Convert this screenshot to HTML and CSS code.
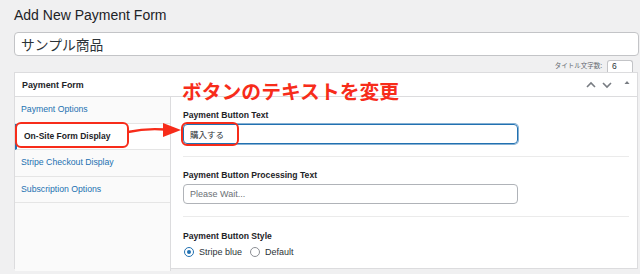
FILE: index.html
```html
<!DOCTYPE html>
<html lang="ja">
<head>
<meta charset="utf-8">
<title>Add New Payment Form</title>
<link rel="stylesheet" href="styles.css">
</head>
<body>
<div class="wrap">
  <h1 class="page-title">Add New Payment Form</h1>
  <div class="title-input">サンプル商品</div>
  <div class="count-row">
    <span class="count-label">タイトル文字数:</span>
    <span class="count-box">6</span>
  </div>
  <div class="panel">
    <div class="panel-head">
      <span class="panel-title">Payment Form</span>
      <span class="panel-icons">
        <svg class="ico" width="12" height="10" viewBox="0 0 12 10"><path d="M2 7 L6 3 L10 7" fill="none" stroke="#787c82" stroke-width="1.6"/></svg>
        <svg class="ico" width="12" height="10" viewBox="0 0 12 10"><path d="M2 3 L6 7 L10 3" fill="none" stroke="#787c82" stroke-width="1.6"/></svg>
        <svg class="ico tri" width="8" height="10" viewBox="0 0 8 10"><path d="M1.5 6 L4 3 L6.5 6 Z" fill="#787c82"/></svg>
      </span>
    </div>
    <div class="panel-body">
      <ul class="tabs">
        <li class="tab">Payment Options</li>
        <li class="tab active">On-Site Form Display</li>
        <li class="tab">Stripe Checkout Display</li>
        <li class="tab">Subscription Options</li>
      </ul>
      <div class="content">
        <div class="field">
          <div class="label">Payment Button Text</div>
          <div class="input focus">購入する</div>
        </div>
        <div class="field">
          <div class="label">Payment Button Processing Text</div>
          <div class="input placeholder">Please Wait...</div>
        </div>
        <div class="field last">
          <div class="label">Payment Button Style</div>
          <div class="radios">
            <span class="radio checked"></span><span class="radio-text">Stripe blue</span>
            <span class="radio"></span><span class="radio-text">Default</span>
          </div>
        </div>
      </div>
    </div>
  </div>
</div>

<div class="note">ボタンのテキストを変更</div>
<div class="mark mark-tab"></div>
<div class="mark mark-input"></div>
<svg class="arrow" width="640" height="274" viewBox="0 0 640 274">
  <path d="M128 132 Q146 128 165 129.5" fill="none" stroke="#f72c1a" stroke-width="2.4"/>
  <polygon points="163,123 181,130 163,137" fill="#f72c1a"/>
</svg>
</body>
</html>
```
FILE: styles.css
```css
* { box-sizing: border-box; }
html, body { margin: 0; padding: 0; }
body {
  background: #f0f0f1;
  font-family: "Liberation Sans", "Noto Sans CJK JP", sans-serif;
  color: #1d2327;
  width: 640px;
  height: 274px;
  overflow: hidden;
  position: relative;
}
.wrap { padding: 0 2px 0 14px; }
.page-title {
  margin: 0;
  padding-top: 5px;
  height: 32px;
  font-size: 14px;
  font-weight: 400;
  line-height: 20px;
  color: #1d2327;
}
.title-input {
  height: 24px;
  margin-right: -1px;
  background: #fff;
  border: 1px solid #c3c4c7;
  border-radius: 4px;
  padding-left: 6px;
  font-family: "Noto Sans CJK JP", sans-serif;
  font-size: 13.8px;
  line-height: 22px;
  color: #2c3338;
}
.count-row {
  height: 16px;
  display: flex;
  justify-content: flex-end;
  align-items: flex-start;
  padding-right: 5px;
}
.count-label {
  font-family: "Noto Sans CJK JP", sans-serif;
  font-size: 6.5px;
  line-height: 8px;
  color: #646970;
  margin-top: 5px;
  margin-right: 5px;
}
.count-box {
  margin-top: 4px;
  width: 26px;
  height: 12px;
  background: #fff;
  border: 1px solid #c3c4c7;
  border-bottom: 0;
  border-radius: 3px 3px 0 0;
  font-size: 8.5px;
  padding-left: 4px;
  line-height: 10px;
  color: #2c3338;
}
.panel {
  background: #fff;
  border: 1px solid #dcdcde;
  height: 197px;
  display: flex;
  flex-direction: column;
}
.panel-head {
  height: 24px;
  flex: none;
  border-bottom: 1px solid #dcdcde;
  display: flex;
  align-items: center;
  justify-content: space-between;
  padding: 0 6px 0 7px;
}
.panel-title { font-size: 8.9px; font-weight: 700; color: #1d2327; }
.panel-icons { display: flex; align-items: center; gap: 4px; }
.ico { display: block; }
.tri { margin-left: 6px; margin-top: -3px; }
.panel-body { flex: 1; display: flex; }
.tabs {
  list-style: none;
  margin: 0;
  padding: 0;
  width: 156px;
  flex: none;
  background: #fafafa;
  border-right: 1px solid #dcdcde;
}
.tab {
  height: 26.5px;
  border-bottom: 1px solid #e5e5e5;
  font-size: 8.7px;
  line-height: 25.5px;
  padding-left: 6px;
  color: #2271b1;
}
.tab.active {
  background: #fff;
  color: #1d2327;
  font-weight: 700;
  border-left: 2px solid #2271b1;
  padding-left: 7px;
  font-size: 8.5px;
}
.content { flex: 1; padding: 0 8px 0 12px; }
.field { padding: 11px 0 12px; border-bottom: 1px solid #ebebeb; }
.field.last { border-bottom: 0; padding-top: 12px; }
.label {
  font-size: 8.6px;
  font-weight: 700;
  line-height: 14px;
  color: #1d2327;
}
.input {
  margin-top: 2px;
  width: 335px;
  height: 20px;
  border: 1px solid #8c8f94;
  border-radius: 4px;
  font-size: 9px;
  line-height: 18px;
  padding-left: 6px;
  color: #2c3338;
}
.input.focus {
  font-family: "Noto Sans CJK JP", sans-serif;
  font-size: 8.5px;
  border-color: #2271b1;
  box-shadow: 0 0 0 1px rgba(34,113,177,0.55);
}
.input.placeholder { color: #6b7075; border-color: #b0b3b8; }
.radios {
  margin-top: 2px;
  height: 14px;
  display: flex;
  align-items: center;
  padding-left: 1px;
}
.radio {
  width: 10px;
  height: 10px;
  border: 1px solid #8c8f94;
  border-radius: 50%;
  background: #fff;
  position: relative;
  flex: none;
}
.radio.checked { border-color: #2271b1; }
.radio.checked::after {
  content: "";
  position: absolute;
  left: 2px; top: 2px;
  width: 4px; height: 4px;
  border-radius: 50%;
  background: #2271b1;
}
.radio-text { font-size: 9px; color: #2c3338; margin: 0 8px 0 5px; }
.note {
  position: absolute;
  left: 182px;
  top: 80px;
  font-family: "Noto Sans CJK JP", sans-serif;
  font-size: 19.8px;
  font-weight: 700;
  line-height: 22px;
  color: #f72c1a;
}
.mark {
  position: absolute;
  border: 2.5px solid #f72c1a;
  border-radius: 6px;
}
.mark-tab { left: 15px; top: 122px; width: 114px; height: 26px; }
.mark-input { left: 181px; top: 122px; width: 58px; height: 24px; }
.arrow { position: absolute; left: 0; top: 0; pointer-events: none; }
```
